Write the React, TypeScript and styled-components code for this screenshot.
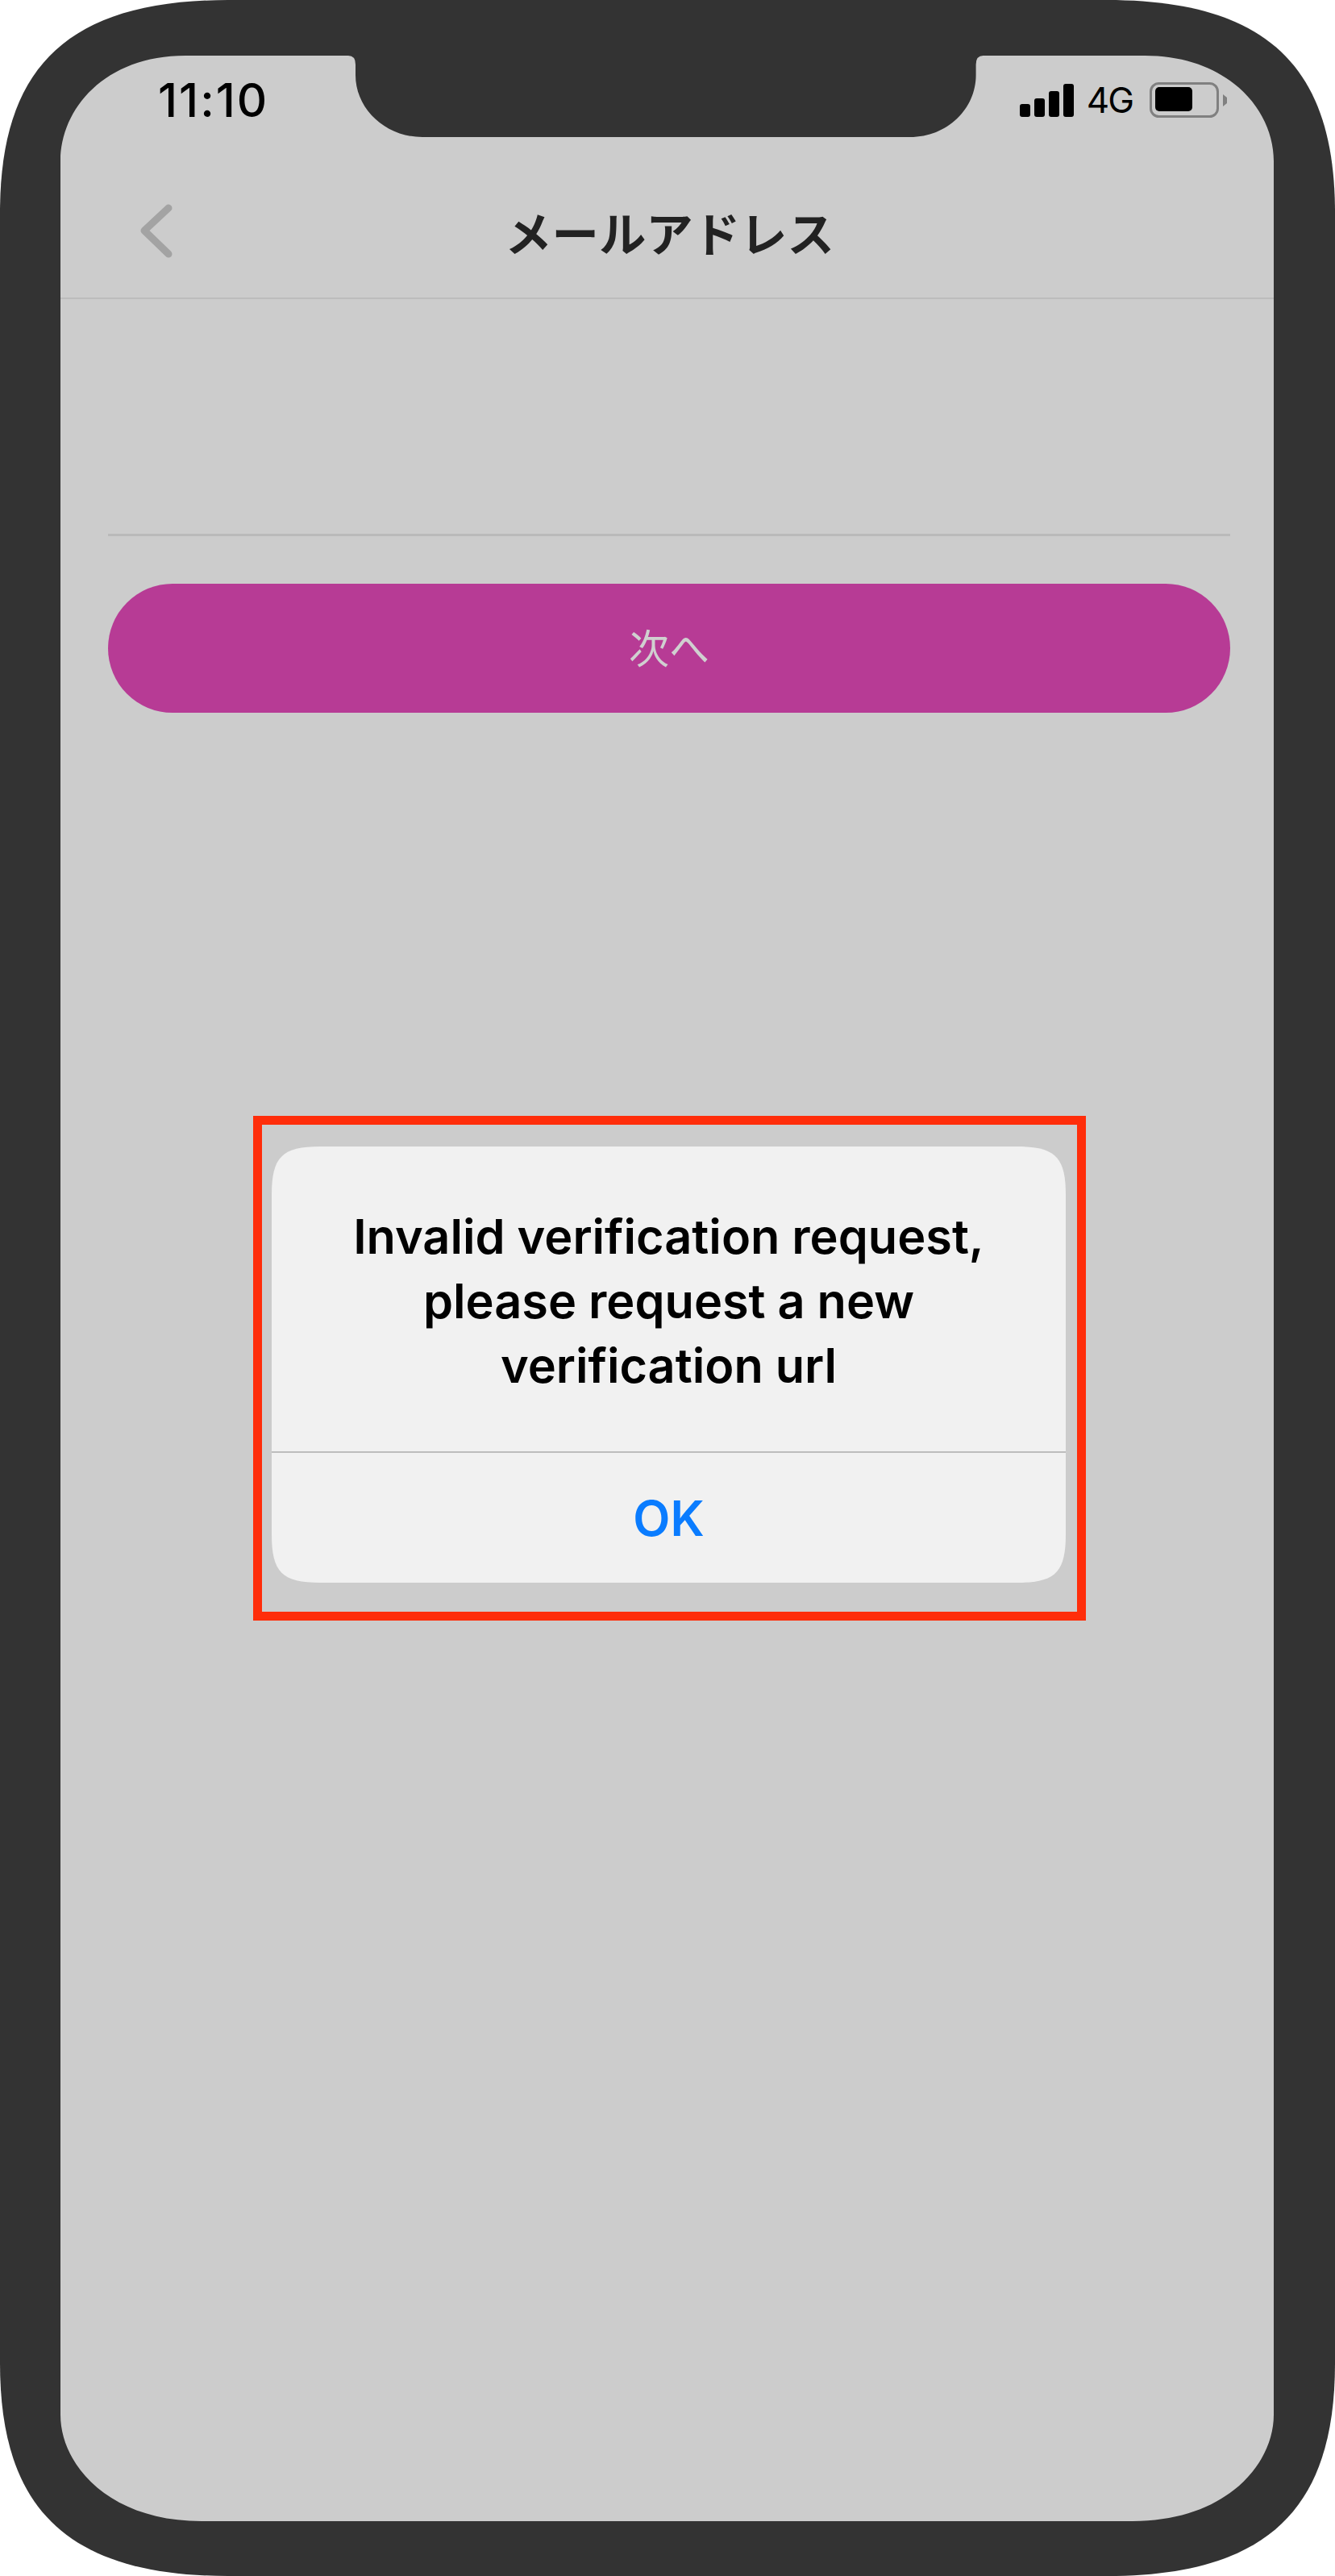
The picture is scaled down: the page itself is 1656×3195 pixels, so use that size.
import React from "react";
import styled, { createGlobalStyle } from "styled-components";

const GlobalStyle = createGlobalStyle`
  html, body { margin: 0; padding: 0; background: #fff; }
  body { font-family: Inter, "Noto Sans CJK JP", sans-serif; }
`;

const Phone = styled.div`
  box-sizing: border-box;
  width: 1656px;
  height: 3195px;
  padding: 69px 76px 68px 75px;
  background: #333333;
  clip-path: path("M0 264 C0 88 79 0 283 0 L1373 0 C1577 0 1656 88 1656 264 L1656 2931 C1656 3107 1577 3195 1373 3195 L283 3195 C79 3195 0 3107 0 2931 Z");
`;

const Screen = styled.div`
  position: relative;
  display: flex;
  flex-direction: column;
  width: 1505px;
  height: 3058px;
  background: #cccccc;
  clip-path: path("M0 131 C0 66 55 0 155 0 L357 0 Q366 0 366 11 L366 24 C366 66 403 101 449 101 L1054 101 C1100 101 1135.6 66 1135.6 24 L1135.6 11 Q1135.6 0 1144.6 0 L1345 0 C1447 0 1505 66 1505 131 L1505 2926 C1505 2988 1445 3058 1330 3058 L175 3058 C60 3058 0 2988 0 2926 Z");
`;

const StatusBar = styled.div`
  display: flex;
  align-items: center;
  justify-content: space-between;
  box-sizing: border-box;
  height: 110px;
  padding: 0 58px 0 121px;
  flex: none;
`;

const Time = styled.span`
  font-size: 58px;
  font-weight: 500;
  line-height: 1;
  letter-spacing: 2px;
  color: #000;
`;

const StatusIcons = styled.div`
  display: flex;
  align-items: center;
`;

const NetworkLabel = styled.span`
  margin: 0 21px 0 16px;
  font-size: 44px;
  font-weight: 400;
  line-height: 1;
  letter-spacing: -2px;
  color: #000;
`;

const NavBar = styled.div`
  display: grid;
  grid-template-columns: 1fr auto 1fr;
  align-items: center;
  box-sizing: border-box;
  height: 192px;
  padding: 26px 0 0 6px;
  border-bottom: 2px solid #bcbcbc;
  flex: none;
`;

const BackButton = styled.div`
  display: flex;
  margin-left: 92px;
`;

const NavTitle = styled.h1`
  margin: 0;
  font-family: "Noto Sans CJK JP", sans-serif;
  font-size: 58.4px;
  font-weight: 700;
  line-height: 1;
  color: #222222;
`;

const Form = styled.div`
  display: flex;
  flex-direction: column;
  padding: 291px 54px 0 59px;
`;

const InputLine = styled.div`
  height: 3px;
  background: #bababa;
`;

const NextButton = styled.button`
  display: flex;
  align-items: center;
  justify-content: center;
  height: 160px;
  margin-top: 59px;
  padding: 0 0 6px;
  border: none;
  border-radius: 80px;
  background: #b73b95;
  font-family: "Noto Sans CJK JP", sans-serif;
  font-size: 50px;
  font-weight: 400;
  color: #d0d0d0;
`;

const Highlight = styled.div`
  position: absolute;
  left: 239px;
  top: 1315px;
  box-sizing: border-box;
  width: 1033px;
  height: 626px;
  padding: 27px 14px 37px 12px;
  border: 11px solid #ff2d0a;
`;

const Alert = styled.div`
  display: flex;
  flex-direction: column;
  height: 541px;
  background: #f1f1f1;
  clip-path: path("M0 60 C0 13 13 0 60 0 L925 0 C972 0 985 13 985 60 L985 481 C985 528 972 541 925 541 L60 541 C13 541 0 528 0 481 Z");
`;

const AlertMessage = styled.p`
  display: flex;
  align-items: flex-start;
  justify-content: center;
  box-sizing: border-box;
  height: 380px;
  margin: 0;
  padding-top: 71px;
  border-bottom: 2px solid #bdbdbd;
  font-size: 59.4px;
  font-weight: 600;
  line-height: 80px;
  text-align: center;
  color: #000;
  flex: none;
`;

const AlertAction = styled.div`
  display: flex;
  flex: 1;
  align-items: center;
  justify-content: center;
  font-size: 60px;
  font-weight: 600;
  line-height: 1;
  color: #0a7cff;
`;

const SignalIcon = () => (
  <svg width="67" height="41" viewBox="0 0 67 41" fill="#000">
    <rect x="0" y="25" width="13" height="16" rx="3" />
    <rect x="18" y="18" width="13" height="23" rx="3" />
    <rect x="36" y="9" width="13" height="32" rx="3" />
    <rect x="54" y="0" width="13" height="41" rx="3" />
  </svg>
);

const BatteryIcon = () => (
  <svg width="96" height="44" viewBox="0 0 96 44">
    <rect x="1.5" y="1.5" width="83" height="41" rx="10" fill="none" stroke="#808080" strokeWidth="3" />
    <rect x="7" y="6" width="46" height="30" rx="5" fill="#000" />
    <path d="M91 15 L96 19 L96 26 L91 30 Z" fill="#808080" />
  </svg>
);

const BackIcon = () => (
  <svg width="42" height="68" viewBox="0 0 42 68" fill="none" stroke="#a3a3a3" strokeWidth="9" strokeLinecap="round" strokeLinejoin="round">
    <path d="M36 5 L6 33 L36 62" />
  </svg>
);

export default function App() {
  return (
    <>
      <GlobalStyle />
      <Phone>
        <Screen>
          <StatusBar>
            <Time>11:10</Time>
            <StatusIcons>
              <SignalIcon />
              <NetworkLabel>4G</NetworkLabel>
              <BatteryIcon />
            </StatusIcons>
          </StatusBar>
          <NavBar>
            <BackButton>
              <BackIcon />
            </BackButton>
            <NavTitle>メールアドレス</NavTitle>
          </NavBar>
          <Form>
            <InputLine />
            <NextButton>次へ</NextButton>
          </Form>
          <Highlight>
            <Alert>
              <AlertMessage>
                Invalid verification request,
                <br />
                please request a new
                <br />
                verification url
              </AlertMessage>
              <AlertAction>OK</AlertAction>
            </Alert>
          </Highlight>
        </Screen>
      </Phone>
    </>
  );
}
